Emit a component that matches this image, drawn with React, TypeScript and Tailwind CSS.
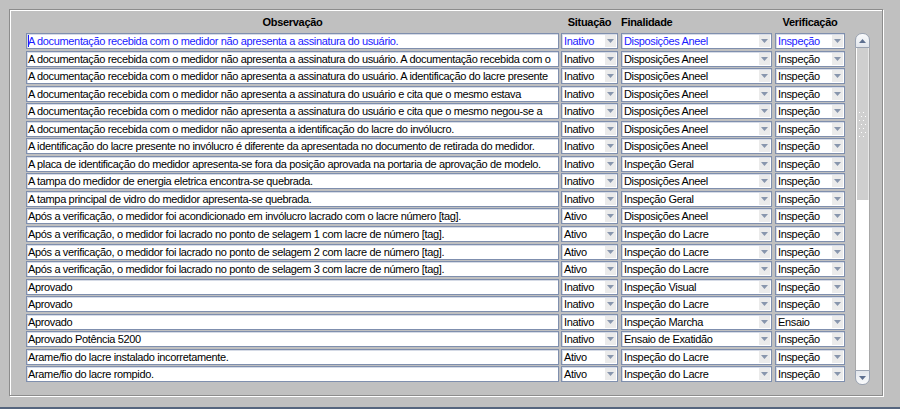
import React from "react";

type Row = { obs: string; sit: string; fin: string; ver: string };

const docA = "A documentação recebida com o medidor não apresenta a assinatura do usuário";

const rows: Row[] = [
  { obs: docA + ".", sit: "Inativo", fin: "Disposições Aneel", ver: "Inspeção" },
  { obs: docA + ". A documentação recebida com o", sit: "Inativo", fin: "Disposições Aneel", ver: "Inspeção" },
  { obs: docA + ". A identificação do lacre presente", sit: "Inativo", fin: "Disposições Aneel", ver: "Inspeção" },
  { obs: docA + " e cita que o mesmo estava", sit: "Inativo", fin: "Disposições Aneel", ver: "Inspeção" },
  { obs: docA + " e cita que o mesmo negou-se a", sit: "Inativo", fin: "Disposições Aneel", ver: "Inspeção" },
  { obs: "A documentação recebida com o medidor não apresenta a identificação do lacre do invólucro.", sit: "Inativo", fin: "Disposições Aneel", ver: "Inspeção" },
  { obs: "A identificação do lacre presente no invólucro é diferente da apresentada no documento de retirada do medidor.", sit: "Inativo", fin: "Disposições Aneel", ver: "Inspeção" },
  { obs: "A placa de identificação do medidor apresenta-se fora da posição aprovada na portaria de aprovação de modelo.", sit: "Inativo", fin: "Inspeção Geral", ver: "Inspeção" },
  { obs: "A tampa do medidor de energia eletrica encontra-se quebrada.", sit: "Inativo", fin: "Disposições Aneel", ver: "Inspeção" },
  { obs: "A tampa principal de vidro do medidor apresenta-se quebrada.", sit: "Inativo", fin: "Inspeção Geral", ver: "Inspeção" },
  { obs: "Após a verificação, o medidor foi acondicionado em invólucro lacrado com o lacre número [tag].", sit: "Ativo", fin: "Disposições Aneel", ver: "Inspeção" },
  { obs: "Após a verificação, o medidor foi lacrado no ponto de selagem 1 com lacre de número [tag].", sit: "Ativo", fin: "Inspeção do Lacre", ver: "Inspeção" },
  { obs: "Após a verificação, o medidor foi lacrado no ponto de selagem 2 com lacre de número [tag].", sit: "Ativo", fin: "Inspeção do Lacre", ver: "Inspeção" },
  { obs: "Após a verificação, o medidor foi lacrado no ponto de selagem 3 com lacre de número [tag].", sit: "Ativo", fin: "Inspeção do Lacre", ver: "Inspeção" },
  { obs: "Aprovado", sit: "Inativo", fin: "Inspeção Visual", ver: "Inspeção" },
  { obs: "Aprovado", sit: "Inativo", fin: "Inspeção do Lacre", ver: "Inspeção" },
  { obs: "Aprovado", sit: "Inativo", fin: "Inspeção Marcha", ver: "Ensaio" },
  { obs: "Aprovado Potência 5200", sit: "Inativo", fin: "Ensaio de Exatidão", ver: "Inspeção" },
  { obs: "Arame/fio do lacre instalado incorretamente.", sit: "Ativo", fin: "Inspeção do Lacre", ver: "Inspeção" },
  { obs: "Arame/fio do lacre rompido.", sit: "Ativo", fin: "Inspeção do Lacre", ver: "Inspeção" },
];

const font = { fontFamily: '"Liberation Sans", Arial, sans-serif' };

function Combo({ text, width, selected }: { text: string; width: string; selected: boolean }) {
  return (
    <div
      className={`${width} h-[16px] flex items-stretch bg-white border border-[#7f8fae] shadow-[inset_1px_1px_0_#d6dbe6] overflow-hidden`}
    >
      <div
        className={`flex-1 pl-[2px] text-[11px] leading-[14px] tracking-[-0.35px] whitespace-nowrap overflow-hidden ${
          selected ? "text-[#1a1aff]" : "text-black"
        }`}
      >
        {text}
      </div>
      <div className="w-[11px] mr-[1px] my-[1px] bg-[#ebebeb] flex items-center justify-center">
        <svg width="7" height="4" viewBox="0 0 7 4">
          <path d="M0 0 H7 L3.5 4 Z" fill="#8896ad" />
        </svg>
      </div>
    </div>
  );
}

function Scrollbar() {
  const dots = [0, 1, 2, 3, 4, 5, 6];
  return (
    <div className="w-[15px] h-[352px] flex flex-col">
      <div className="h-[15px] rounded-t-[7px] border border-[#9aa3b2] bg-gradient-to-b from-[#fafbfc] to-[#e2e6ec] flex items-center justify-center">
        <svg width="7" height="4" viewBox="0 0 7 4">
          <path d="M0 4 H7 L3.5 0 Z" fill="#5e7090" />
        </svg>
      </div>
      <div className="flex-1 flex flex-col border-x border-[#a8a8a8] bg-white">
        <div className="h-[152px] bg-[#cfcfcf] border-l border-white border-r border-r-[#e8e8e8] flex flex-col items-start justify-center pl-[2px] gap-[3px]">
          {dots.map((i) => (
            <div key={i} className={`flex gap-[3px] ${i % 2 ? "pl-[2px]" : ""}`}>
              <div className="w-[1px] h-[1px] bg-white" />
              <div className="w-[1px] h-[1px] bg-white" />
            </div>
          ))}
        </div>
        <div className="flex-1" />
      </div>
      <div className="h-[15px] rounded-b-[7px] border border-[#9aa3b2] bg-gradient-to-b from-[#e2e6ec] to-[#fafbfc] flex items-center justify-center">
        <svg width="7" height="4" viewBox="0 0 7 4">
          <path d="M0 0 H7 L3.5 4 Z" fill="#5e7090" />
        </svg>
      </div>
    </div>
  );
}

export default function App() {
  return (
    <div className="w-[900px] h-[409px] bg-[#c0c0c0] flex flex-col overflow-hidden" style={font}>
      <div className="flex-1 pl-[9px] pt-[9px]">
        <div className="w-[874px] h-[387px] border border-[#8c8c8c] shadow-[inset_1px_1px_0_#ffffff,1px_1px_0_#ffffff] pl-[16px] flex flex-col">
          {/* header */}
          <div className="h-[23px] flex items-center text-[11px] tracking-[-0.3px] font-bold text-black pt-[2px]">
            <div className="w-[533px] text-center">Observação</div>
            <div className="w-[2px]" />
            <div className="w-[57px] text-center">Situação</div>
            <div className="w-[3px]" />
            <div className="w-[151px]">Finalidade</div>
            <div className="w-[3px]" />
            <div className="w-[70px] text-center">Verificação</div>
          </div>
          {/* body */}
          <div className="flex">
            <div className="flex flex-col">
              {rows.map((r, i) => {
                const sel = i === 0;
                return (
                  <div key={i} className="h-[17.55px] flex items-start">
                    <div className="w-[533px] h-[16px] bg-white border border-[#7f8fae] shadow-[inset_1px_1px_0_#d6dbe6] overflow-hidden relative">
                      <div
                        className={`pl-[1px] text-[11px] leading-[14px] tracking-[-0.35px] whitespace-nowrap ${
                          sel ? "text-[#1a1aff]" : "text-black"
                        }`}
                      >
                        {r.obs}
                      </div>
                      {sel && <div className="absolute left-[1px] top-[1px] w-[1px] h-[12px] bg-[#1a1aff]" />}
                    </div>
                    <div className="w-[2px]" />
                    <Combo text={r.sit} width="w-[57px]" selected={sel} />
                    <div className="w-[3px]" />
                    <Combo text={r.fin} width="w-[151px]" selected={sel} />
                    <div className="w-[3px]" />
                    <Combo text={r.ver} width="w-[70px]" selected={sel} />
                  </div>
                );
              })}
            </div>
            <div className="w-[10px]" />
            <Scrollbar />
          </div>
        </div>
      </div>
      <div className="h-[2px] bg-[#56667f]" />
    </div>
  );
}
